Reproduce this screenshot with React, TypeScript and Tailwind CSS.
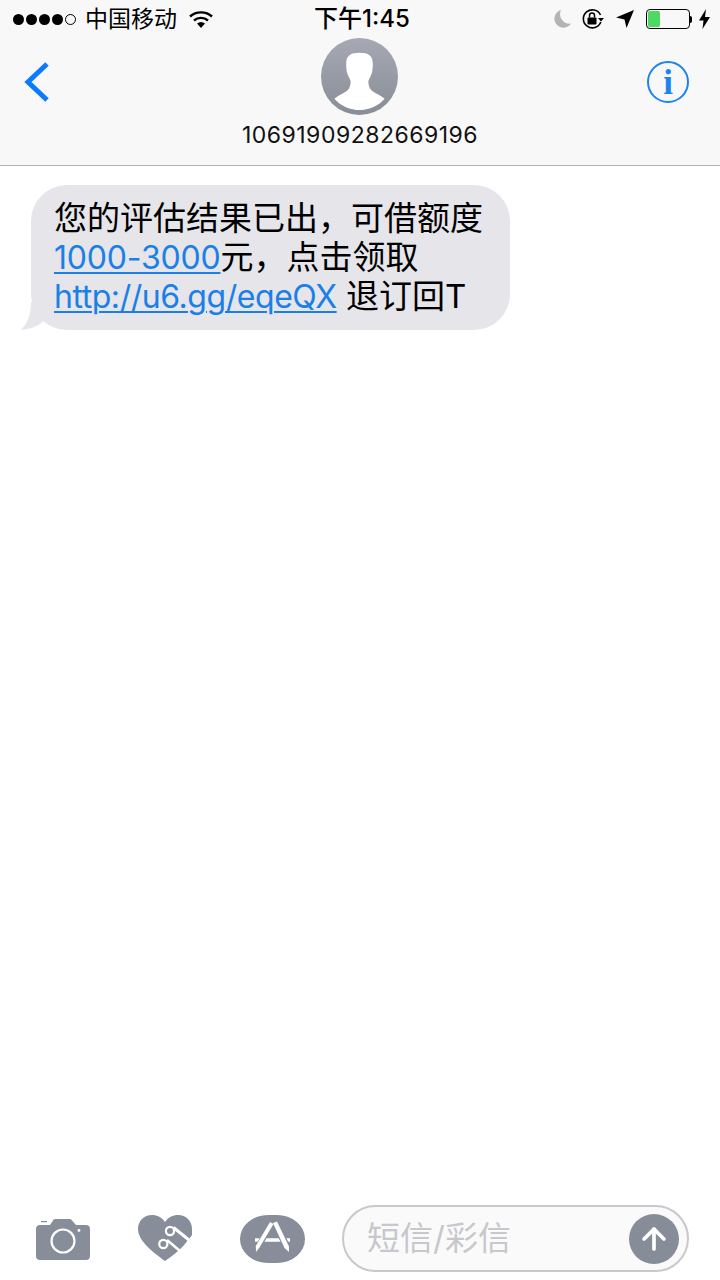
import React from 'react';
import { ArrowUp } from 'lucide-react';

const latin = "font-['Inter','Noto_Sans_CJK_SC',sans-serif]";
const comma = '\uFF0C';

const StatusBar = () => (
  <div className="grid h-[38px] grid-cols-[1fr_auto_1fr] items-center pl-[13px] pr-[10px] text-black">
    <div className="flex items-center">
      <div className="flex items-center gap-[2px]">
        {[0, 1, 2, 3].map((i) => (
          <span key={i} className="h-[11px] w-[11px] rounded-full bg-black" />
        ))}
        <span className="h-[11px] w-[11px] rounded-full border border-black" />
      </div>
      <span className="ml-[9px] text-[23px] leading-none">中国移动</span>
      <svg className="ml-[12px]" width="24" height="18" viewBox="0 0 24 18">
        <path d="M1 6.5C7 1 17 1 23 6.5" fill="none" stroke="#000" strokeWidth="2.4" />
        <path d="M5 10.5C9 7 15 7 19 10.5" fill="none" stroke="#000" strokeWidth="2.4" />
        <path d="M8 13.5C10.5 11.5 13.5 11.5 16 13.5L12 18Z" fill="#000" />
      </svg>
    </div>
    <div className="pl-[1px] text-[24px] font-medium leading-none">下午1:45</div>
    <div className="flex items-center justify-end">
      <svg width="18" height="20" viewBox="0 0 18 20">
        <path d="M8 1A9 9 0 1 0 18 14.5A9.5 9.5 0 0 1 8 1Z" fill="#b4b4b4" />
      </svg>
      <svg className="ml-[10px]" width="24" height="22" viewBox="0 0 24 22">
        <path d="M19.5 7A9 9 0 1 0 19.8 14" fill="none" stroke="#000" strokeWidth="1.6" />
        <path d="M17 10h6l-3 3.5Z" fill="#000" />
        <rect x="6.5" y="9.5" width="9" height="7" rx="1" fill="#000" />
        <path d="M8.5 9.5V7.5a2.5 2.5 0 0 1 5 0v2" fill="none" stroke="#000" strokeWidth="1.5" />
      </svg>
      <svg className="ml-[11px]" width="18" height="18" viewBox="0 0 18 18">
        <path d="M18 0L10.5 18L8.5 9.5L0 7.5Z" fill="#000" />
      </svg>
      <div className="ml-[12px] flex items-center">
        <div className="h-[20px] w-[44px] rounded-[4px] border border-black p-[1px]">
          <div className="h-full w-[12px] rounded-[2px] bg-[#4cd964]" />
        </div>
        <span className="h-[7px] w-[2px] rounded-r-sm bg-black" />
      </div>
      <svg className="ml-[7px]" width="11" height="20" viewBox="0 0 11 20">
        <path d="M7 0L0 11.5H4.5L3.5 20L11 8H6Z" fill="#000" />
      </svg>
    </div>
  </div>
);

const Avatar = () => (
  <div className="h-[77px] w-[77px] overflow-hidden rounded-full bg-gradient-to-b from-[#a6a9b3] to-[#888d98]">
    <svg width="77" height="77" viewBox="0 0 78 78">
      <path
        d="M39 15C30 15 25.500 18 25.500 26C25.500 31 26 35 27.500 38C28.500 40.500 29.500 42 30 43.500C30 47 29.500 50 27 53C23 56.500 18 57.500 13.500 61.500C20 69 30 73 39 73C48 73 58 69 64.500 61.500C60 57.500 55 56.500 51 53C48.500 50 48 47 48 43.500C48.500 42 49.500 40.500 50.500 38C52 35 52.500 31 52.500 26C52.500 18 48 15 39 15Z"
        fill="#fff"
      />
    </svg>
  </div>
);

const NavBar = () => (
  <div className="grid grid-cols-[1fr_auto_1fr] items-start">
    <div className="pl-[24px] pt-[24px]">
      <svg width="26" height="40" viewBox="0 0 26 40">
        <path d="M23 2L4 20L23 38" fill="none" stroke="#0a7aff" strokeWidth="5" />
      </svg>
    </div>
    <div className="flex flex-col items-center">
      <Avatar />
      <div className={`mt-[6px] text-[23px] leading-[28px] tracking-[0.5px] text-[#111] ${latin}`}>10691909282669196</div>
    </div>
    <div className="flex justify-end pr-[31px] pt-[23px]">
      <div className="flex h-[42px] w-[42px] items-center justify-center rounded-full border-2 border-[#1c84f0] font-['Liberation_Serif',serif] text-[35px] font-bold leading-none text-[#1c84f0]">
        i
      </div>
    </div>
  </div>
);

const Bubble = () => (
  <div className="relative ml-[31px] mt-[19px] w-[479px] rounded-[36px] bg-[#e5e5ea] py-[14px] pl-[23px]">
    <svg className="absolute -left-[10px] bottom-0" width="34" height="28" viewBox="0 0 34 28">
      <path d="M10 0C10 12 7 21 0 27.500C8 27.500 15 25 20 21L30 10L20 0Z" fill="#e5e5ea" />
    </svg>
    <div className={`relative whitespace-nowrap text-[33px] leading-[39px] text-black ${latin}`}>
      <div>您的评估结果已出{comma}可借额度</div>
      <div>
        <span className="text-[32px] tracking-[-0.2px] text-[#1a80e8] underline decoration-2 underline-offset-[3px]">1000-3000</span>元{comma}点击领取
      </div>
      <div>
        <span className="text-[32px] tracking-[-0.45px] text-[#1a80e8] underline decoration-2 underline-offset-[3px]">http://u6.gg/eqeQX</span> 退订回T
      </div>
    </div>
  </div>
);

const Camera = () => (
  <svg width="54" height="42" viewBox="0 0 54 42">
    <path
      d="M4 7H14L17 2.500C17.500 1.500 18.500 1 20 1H33C34.500 1 35.500 1.500 36 2.500L40 7H50C52.500 7 54 8.500 54 11V38C54 40.500 52.500 42 50 42H4C1.500 42 0 40.500 0 38V11C0 8.500 1.500 7 4 7Z"
      fill="#878e99"
    />
    <rect x="5" y="3" width="6" height="1.2" fill="#878e99" />
    <circle cx="27" cy="23" r="11.5" fill="none" stroke="#fff" strokeWidth="2.2" />
    <circle cx="43" cy="12.5" r="1.4" fill="#fff" />
  </svg>
);

const Heart = () => (
  <svg width="54" height="47" viewBox="0 0 54 47">
    <path
      d="M27 7C24 2.500 19 0 14 0C6 0 0 6 0 14C0 26 16 38 27 46C34 41 46 33 54 20V14C54 6 48 0 40 0C35 0 30 2.500 27 7Z"
      fill="#878e99"
    />
    {/* fingers cut out of the lower right of the heart */}
    <path d="M55 20L50 25L42 36L29 47H55Z" fill="#fff" />
    <path d="M35.500 12.500L51 25" stroke="#fff" strokeWidth="3" />
    <path d="M29 25L42 36" stroke="#fff" strokeWidth="2.5" />
    <circle cx="32" cy="16" r="5.200" fill="#fff" />
    <circle cx="32" cy="16" r="3" fill="#878e99" />
    <circle cx="25.300" cy="29" r="5.200" fill="#fff" />
    <circle cx="25.300" cy="29" r="3" fill="#878e99" />
  </svg>
);

const AppStore = () => (
  <svg width="65" height="48" viewBox="0 0 65 48">
    <rect x="0" y="0" width="65" height="48" rx="28" ry="24" fill="#878e99" />
    <path d="M15 25H50" stroke="#fff" strokeWidth="3.5" />
    <path d="M31.500 8.500L18 32" stroke="#878e99" strokeWidth="6" />
    <path d="M35 8L47 32" stroke="#878e99" strokeWidth="7" />
    <path d="M30 7L33.500 9L19.500 32.500L16 37L15.800 31Z" fill="#fff" />
    <path d="M33 8L37 6.500L49 31.500L49 37L44.500 33Z" fill="#fff" />
  </svg>
);

const Composer = () => (
  <div className="flex items-center pb-[8px] pl-[36px] pr-[31px]">
    <Camera />
    <div className="ml-[48px]">
      <Heart />
    </div>
    <div className="ml-[48px]">
      <AppStore />
    </div>
    <div className="ml-[37px] flex h-[67px] w-[347px] items-center justify-between rounded-full border-2 border-[#c8c8cd] bg-[#fafafa] pl-[23px] pr-[8px]">
      <span className={`text-[33px] leading-none text-[#c7c7cc] ${latin}`}>短信/彩信</span>
      <div className="flex h-[50px] w-[50px] items-center justify-center rounded-full bg-[#868d98]">
        <ArrowUp size={34} color="#fff" strokeWidth={2.6} />
      </div>
    </div>
  </div>
);

export default function App() {
  return (
    <div className={`flex h-[1280px] w-[720px] flex-col overflow-hidden bg-white ${latin}`}>
      <div className="h-[166px] border-b border-[#b2b2b2] bg-[#f8f8f8]">
        <StatusBar />
        <NavBar />
      </div>
      <Bubble />
      <div className="flex-1" />
      <Composer />
    </div>
  );
}
